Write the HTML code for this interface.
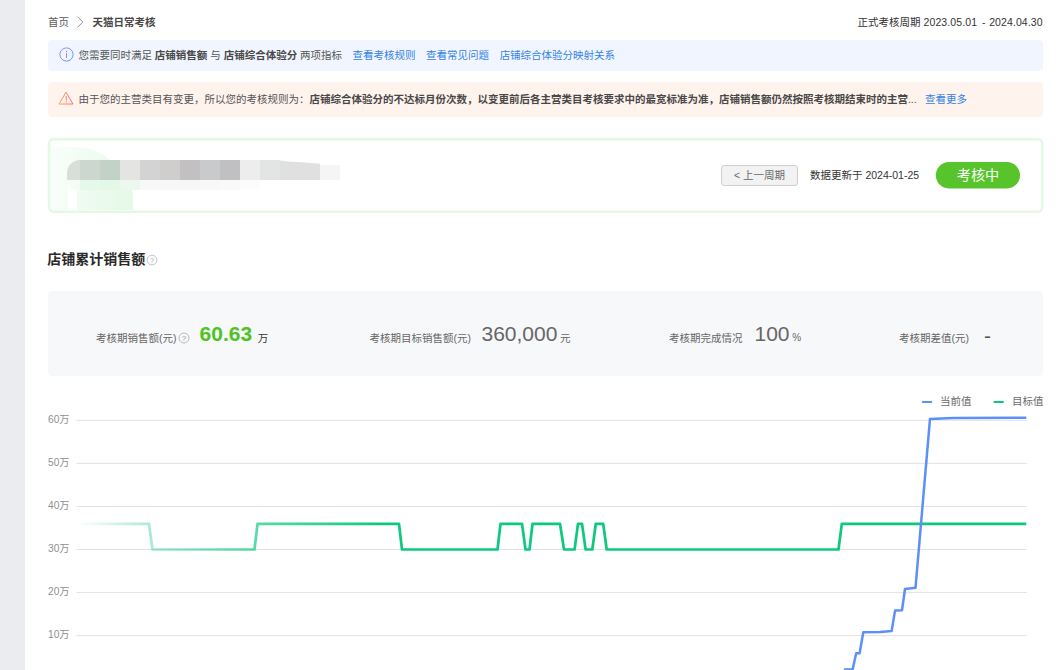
<!DOCTYPE html>
<html lang="zh-CN">
<head>
<meta charset="utf-8">
<title>天猫日常考核</title>
<style>
*{box-sizing:border-box;margin:0;padding:0}
html,body{width:1061px;height:670px;overflow:hidden;background:#fff}
body{position:relative;font-family:"Liberation Sans","Noto Sans CJK SC",sans-serif;font-size:10.5px;color:#333;-webkit-font-smoothing:antialiased}
.abs{position:absolute;white-space:nowrap}
.side{left:0;top:0;width:25px;height:670px;background:#eaecf0}
.crumb{left:48px;top:14px;height:16px;line-height:16px;color:#5c5c5c}
.crumb b{color:#484848;font-weight:700}
.crumb svg{vertical-align:-2.4px;margin:0 8.6px 0 7px}
.period{right:18.3px;top:14px;height:16px;line-height:16px;color:#333}
.info{left:48px;top:40px;width:995px;height:31px;background:#f0f5ff;border-radius:4px;line-height:31px;color:#555}
.warn{left:48px;top:82px;width:995px;height:35px;background:#fff3ee;border-radius:4px;line-height:35px;color:#555}
.info b,.warn b{color:#484848;font-weight:700}
.info .txt,.warn .txt{position:absolute;left:30.4px;top:0}
.info a,.warn a{color:#3583e4;text-decoration:none}
.info a{margin-left:7.6px}
.ico{position:absolute;left:11px}
.card{left:48px;top:138px;width:994px;height:74px;border:2px solid #e6f8e6;border-radius:4px;background:#fff;overflow:hidden}
.btn{left:721px;top:165px;width:77px;height:21px;border:1px solid #cfcfcf;border-radius:3px;background:#f2f2f2;text-align:center;line-height:19px;color:#686868;font-size:10.5px}
.upd{left:810px;top:167px;height:16px;line-height:16px;color:#333}
.pill{left:936px;top:162px;width:84px;height:26px;color:#fff;font-size:14.2px;line-height:26px;text-align:center}
.h2{left:47.3px;top:248.7px;height:20px;line-height:20px;font-size:14px;font-weight:700;color:#2a2a2a}
.panel{left:48px;top:291px;width:995px;height:85px;background:#f7f8fa;border-radius:4px}
.lbl{top:330px;height:16px;line-height:16px;color:#666}
.num{top:322.4px;height:24px;line-height:24px;font-size:21px;color:#666}
.unit{top:330px;height:16px;line-height:16px;color:#666}
</style>
</head>
<body>
<div class="abs side"></div>

<div class="abs crumb">首页<svg width="8" height="12" viewBox="0 0 8 12"><path d="M1.6 0.8 L6.9 6 L1.6 11.2" fill="none" stroke="#909090" stroke-width="1"/></svg><b>天猫日常考核</b></div>
<div class="abs period">正式考核周期 <span style="letter-spacing:0.1px">2023.05.01<span style="word-spacing:2px"> </span>-<span style="word-spacing:0.4px"> </span>2024.04.30</span></div>

<div class="abs info">
  <svg class="ico" style="top:7.2px;left:11.1px" width="15" height="15" viewBox="0 0 15 15"><defs><linearGradient id="gi" x1="0" y1="0" x2="1" y2="0.6"><stop offset="0" stop-color="#b87ff0"/><stop offset="1" stop-color="#5a9eff"/></linearGradient></defs><circle cx="7.5" cy="7.5" r="6.6" fill="none" stroke="url(#gi)" stroke-width="1"/><rect x="7" y="6.2" width="1" height="4.8" fill="#9c80f6"/><rect x="7" y="3.9" width="1" height="1.3" fill="#9c80f6"/></svg>
  <span class="txt">您需要同时满足 <b>店铺销售额</b> 与 <b>店铺综合体验分</b> 两项指标 <a>查看考核规则</a> <a>查看常见问题</a> <a>店铺综合体验分映射关系</a></span>
</div>

<div class="abs warn">
  <svg class="ico" style="top:9.4px;left:10.3px" width="16" height="14" viewBox="0 0 16 14"><defs><linearGradient id="gw" x1="0" y1="0" x2="1" y2="0"><stop offset="0" stop-color="#ffa552"/><stop offset="1" stop-color="#ff6b6e"/></linearGradient></defs><path d="M8 1.2 L15 13 L1 13 Z" fill="none" stroke="url(#gw)" stroke-width="1" stroke-linejoin="round"/><rect x="7.7" y="5" width="1" height="4.4" fill="#ff7d5e"/><rect x="7.7" y="10.4" width="1" height="1.2" fill="#ff7d5e"/></svg>
  <span class="txt">由于您的主营类目有变更，所以您的考核规则为：<b>店铺综合体验分的不达标月份次数，以变更前后各主营类目考核要求中的最宽标准为准，店铺销售额仍然按照考核期结束时的主营</b>... <a style="margin-left:5.5px">查看更多</a></span>
</div>

<svg class="abs" style="left:0;top:130px" width="1061" height="90" viewBox="0 130 1061 90"><rect x="49.1" y="139.1" width="993.1" height="72.6" rx="4.5" fill="#fff" stroke="#e5f8e6" stroke-width="2.6"/></svg>
<div class="abs" style="left:50.5px;top:147px;width:71.5px;height:63.4px;border-radius:10px 46px 0 0 / 4px 40px 0 0;background:linear-gradient(90deg,#f8fef9,#effbf1 70%)"></div>
<div class="abs" style="left:68px;top:182px;width:12px;height:28px;background:#fff"></div>
<div class="abs" style="left:77px;top:182px;width:56px;height:28px;border-radius:0 14px 0 0;background:linear-gradient(90deg,#f0fcf2,#e4f9e7)"></div>
<div class="abs" style="left:67px;top:160px;width:13px;height:20px;background:#d8dfdb;border-radius:13px 0 0 0"></div><div class="abs" style="left:80px;top:160px;width:20px;height:20px;background:#ccd8cf"></div><div class="abs" style="left:100px;top:160px;width:20px;height:20px;background:#c3d2c7"></div><div class="abs" style="left:120px;top:160px;width:20px;height:20px;background:#e4e4e3"></div><div class="abs" style="left:140px;top:160px;width:20px;height:20px;background:#d3d3d3"></div><div class="abs" style="left:160px;top:160px;width:20px;height:20px;background:#cfcecd"></div><div class="abs" style="left:180px;top:160px;width:20px;height:20px;background:#c2c0c1"></div><div class="abs" style="left:200px;top:160px;width:20px;height:20px;background:#c9cacc"></div><div class="abs" style="left:220px;top:160px;width:20px;height:20px;background:#c0c0c3"></div><div class="abs" style="left:240px;top:160px;width:20px;height:20px;background:#ededed"></div><div class="abs" style="left:260px;top:160px;width:20px;height:20px;background:#e3e4e4"></div><div class="abs" style="left:280px;top:160px;width:40px;height:20px;background:#e0e0e0;clip-path:polygon(0 0.4px,8px 1.4px,22px 2.3px,40px 3.8px,40px 20px,0 20px)"></div><div class="abs" style="left:320px;top:165px;width:20px;height:15px;background:#f5f5f5"></div>
<div class="abs" style="left:67px;top:180px;width:13px;height:10px;background:#f4fcf5;border-radius:0 0 0 10px"></div><div class="abs" style="left:80px;top:180px;width:20px;height:10px;background:#e6f8e9"></div><div class="abs" style="left:100px;top:180px;width:20px;height:10px;background:#e3f8e7"></div><div class="abs" style="left:120px;top:180px;width:20px;height:10px;background:#ecf7ee"></div><div class="abs" style="left:140px;top:180px;width:20px;height:10px;background:#f8f8f8"></div><div class="abs" style="left:160px;top:180px;width:20px;height:10px;background:#f7f7f7"></div><div class="abs" style="left:180px;top:180px;width:20px;height:10px;background:#f7f7f7"></div><div class="abs" style="left:200px;top:180px;width:20px;height:10px;background:#f8f8f8"></div><div class="abs" style="left:220px;top:180px;width:20px;height:10px;background:#f9f9f9"></div><div class="abs" style="left:240px;top:180px;width:20px;height:10px;background:#fcfcfc"></div>
<div class="abs btn">&lt; 上一周期</div>
<div class="abs upd">数据更新于 2024-01-25</div>
<svg class="abs" style="left:930px;top:158px" width="100" height="36" viewBox="930 158 100 36"><rect x="935.8" y="162.1" width="84.2" height="26.3" rx="13.15" fill="#58c42c"/></svg>
<div class="abs pill">考核中</div>

<div class="abs h2">店铺累计销售额</div>

<div class="abs panel"></div>
<svg class="abs" style="left:146.3px;top:253.6px" width="12" height="12" viewBox="0 0 12 12"><circle cx="6" cy="6" r="4.9" fill="none" stroke="#b8bcc6" stroke-width="0.9"/><text x="6" y="8.7" font-size="7.6" text-anchor="middle" fill="#aaa" font-family="Liberation Sans, sans-serif">?</text></svg>

<div class="abs lbl" style="left:96px">考核期销售额(元)</div>
<svg class="abs" style="left:177.9px;top:331.5px" width="12" height="12" viewBox="0 0 12 12"><circle cx="6" cy="6" r="5" fill="none" stroke="#b2b2b2" stroke-width="0.9"/><text x="6" y="8.8" font-size="8" text-anchor="middle" fill="#999" font-family="Liberation Sans, sans-serif">?</text></svg>
<div class="abs num" style="left:199.6px;color:#4fc224;font-weight:700">60.63</div>
<div class="abs unit" style="left:257.7px;color:#333">万</div>

<div class="abs lbl" style="left:369.5px">考核期目标销售额(元)</div>
<div class="abs num" style="left:481.5px">360,000</div>
<div class="abs unit" style="left:560px">元</div>

<div class="abs lbl" style="left:669px">考核期完成情况</div>
<div class="abs num" style="left:754.5px">100</div>
<div class="abs unit" style="left:792.3px;font-size:10px">%</div>

<div class="abs lbl" style="left:899px">考核期差值(元)</div>
<div class="abs num" style="left:984px;top:323.6px;color:#555">-</div>

<svg class="abs" style="left:0;top:0" width="1061" height="670" viewBox="0 0 1061 670" font-family="Liberation Sans, Noto Sans CJK SC, sans-serif">
<defs><linearGradient id="gg" gradientUnits="userSpaceOnUse" x1="77" y1="0" x2="380" y2="0"><stop offset="0" stop-color="#0dc97f" stop-opacity="0"/><stop offset="0.24" stop-color="#0dc97f" stop-opacity="0.36"/><stop offset="0.6" stop-color="#0dc97f" stop-opacity="0.7"/><stop offset="1" stop-color="#0dc97f" stop-opacity="1"/></linearGradient></defs>
<line x1="76.5" x2="1027" y1="420.35" y2="420.35" stroke="#e2e2e2" stroke-width="1"/><line x1="76.5" x2="1027" y1="463.4" y2="463.4" stroke="#e2e2e2" stroke-width="1"/><line x1="76.5" x2="1027" y1="506.45" y2="506.45" stroke="#e2e2e2" stroke-width="1"/><line x1="76.5" x2="1027" y1="549.5" y2="549.5" stroke="#e2e2e2" stroke-width="1"/><line x1="76.5" x2="1027" y1="592.6" y2="592.6" stroke="#e2e2e2" stroke-width="1"/><line x1="76.5" x2="1027" y1="635.65" y2="635.65" stroke="#e2e2e2" stroke-width="1"/>
<text x="48" y="422.90" font-size="10.2" fill="#909090">60万</text><text x="48" y="466.00" font-size="10.2" fill="#909090">50万</text><text x="48" y="509.10" font-size="10.2" fill="#909090">40万</text><text x="48" y="552.20" font-size="10.2" fill="#909090">30万</text><text x="48" y="595.30" font-size="10.2" fill="#909090">20万</text><text x="48" y="638.20" font-size="10.2" fill="#909090">10万</text>
<path d="M77 523.8 L149 523.8 L152.5 549.5 L254.5 549.5 L257.5 523.8 L399 523.8 L402 549.5 L497.5 549.5 L500.5 523.8 L522 523.8 L525.5 549.5 L529.5 549.5 L532.5 523.8 L560 523.8 L564 549.5 L574.6 549.5 L578 523.8 L582 523.8 L585.6 549.5 L592.3 549.5 L595.8 523.8 L603.2 523.8 L606.7 549.5 L838.5 549.5 L841.8 523.8 L1026.3 523.8" fill="none" stroke="url(#gg)" stroke-width="2.7" stroke-linejoin="round"/>
<path d="M841 690 L845 669.6 L852.6 669.4 L856.2 653.3 L859.6 653.2 L863.3 632.2 L880.3 632.1 L891.6 631.1 L895.1 610.4 L902 610.2 L905 589 L915.5 587.8 L930 418.9 L953 418.1 L1026.3 417.7" fill="none" stroke="#5b8ff9" stroke-width="2.5" stroke-linejoin="round"/>
<rect x="921.8" y="401" width="10.4" height="2" rx="1" fill="#5b8ff9"/>
<text x="940" y="404.9" font-size="10.5" fill="#6b6b6b">当前值</text>
<rect x="993.4" y="401" width="10.6" height="2" rx="1" fill="#0dc97f"/>
<text x="1012" y="404.9" font-size="10.5" fill="#6b6b6b">目标值</text>
</svg>

</body>
</html>
